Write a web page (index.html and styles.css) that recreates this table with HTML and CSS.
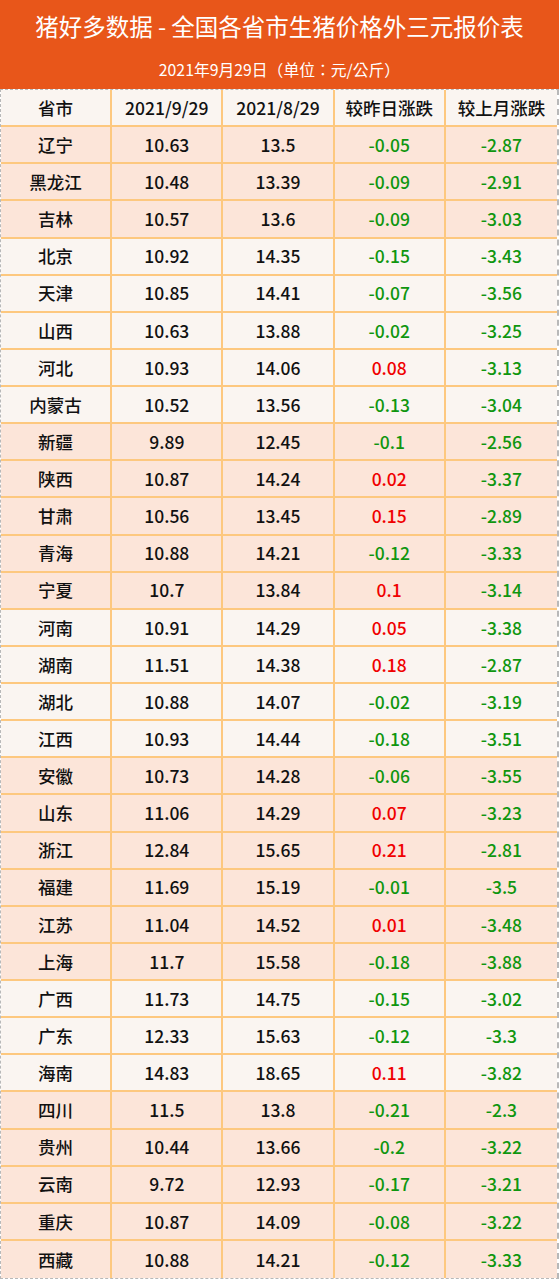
FILE: index.html
```html
<!DOCTYPE html>
<html lang="zh-CN">
<head>
<meta charset="utf-8">
<title>猪好多数据</title>
<link rel="stylesheet" href="styles.css">
</head>
<body>
<div class="header">
  <div class="title">猪好多数据 - 全国各省市生猪价格外三元报价表</div>
  <div class="sub" lang="zh-TW">2021年9月29日（单位：元/公斤）</div>
</div>
<div class="table">
  <div class="row light"><div class="c">省市</div><div class="c">2021/9/29</div><div class="c">2021/8/29</div><div class="c">较昨日涨跌</div><div class="c">较上月涨跌</div></div>
  <div class="row pink"><div class="c">辽宁</div><div class="c">10.63</div><div class="c">13.5</div><div class="c g">-0.05</div><div class="c g">-2.87</div></div>
  <div class="row pink"><div class="c">黑龙江</div><div class="c">10.48</div><div class="c">13.39</div><div class="c g">-0.09</div><div class="c g">-2.91</div></div>
  <div class="row pink"><div class="c">吉林</div><div class="c">10.57</div><div class="c">13.6</div><div class="c g">-0.09</div><div class="c g">-3.03</div></div>
  <div class="row light"><div class="c">北京</div><div class="c">10.92</div><div class="c">14.35</div><div class="c g">-0.15</div><div class="c g">-3.43</div></div>
  <div class="row light"><div class="c">天津</div><div class="c">10.85</div><div class="c">14.41</div><div class="c g">-0.07</div><div class="c g">-3.56</div></div>
  <div class="row light"><div class="c">山西</div><div class="c">10.63</div><div class="c">13.88</div><div class="c g">-0.02</div><div class="c g">-3.25</div></div>
  <div class="row light"><div class="c">河北</div><div class="c">10.93</div><div class="c">14.06</div><div class="c r">0.08</div><div class="c g">-3.13</div></div>
  <div class="row light"><div class="c">内蒙古</div><div class="c">10.52</div><div class="c">13.56</div><div class="c g">-0.13</div><div class="c g">-3.04</div></div>
  <div class="row pink"><div class="c">新疆</div><div class="c">9.89</div><div class="c">12.45</div><div class="c g">-0.1</div><div class="c g">-2.56</div></div>
  <div class="row pink"><div class="c">陕西</div><div class="c">10.87</div><div class="c">14.24</div><div class="c r">0.02</div><div class="c g">-3.37</div></div>
  <div class="row pink"><div class="c">甘肃</div><div class="c">10.56</div><div class="c">13.45</div><div class="c r">0.15</div><div class="c g">-2.89</div></div>
  <div class="row pink"><div class="c">青海</div><div class="c">10.88</div><div class="c">14.21</div><div class="c g">-0.12</div><div class="c g">-3.33</div></div>
  <div class="row pink"><div class="c">宁夏</div><div class="c">10.7</div><div class="c">13.84</div><div class="c r">0.1</div><div class="c g">-3.14</div></div>
  <div class="row light"><div class="c">河南</div><div class="c">10.91</div><div class="c">14.29</div><div class="c r">0.05</div><div class="c g">-3.38</div></div>
  <div class="row light"><div class="c">湖南</div><div class="c">11.51</div><div class="c">14.38</div><div class="c r">0.18</div><div class="c g">-2.87</div></div>
  <div class="row light"><div class="c">湖北</div><div class="c">10.88</div><div class="c">14.07</div><div class="c g">-0.02</div><div class="c g">-3.19</div></div>
  <div class="row light"><div class="c">江西</div><div class="c">10.93</div><div class="c">14.44</div><div class="c g">-0.18</div><div class="c g">-3.51</div></div>
  <div class="row pink"><div class="c">安徽</div><div class="c">10.73</div><div class="c">14.28</div><div class="c g">-0.06</div><div class="c g">-3.55</div></div>
  <div class="row pink"><div class="c">山东</div><div class="c">11.06</div><div class="c">14.29</div><div class="c r">0.07</div><div class="c g">-3.23</div></div>
  <div class="row pink"><div class="c">浙江</div><div class="c">12.84</div><div class="c">15.65</div><div class="c r">0.21</div><div class="c g">-2.81</div></div>
  <div class="row pink"><div class="c">福建</div><div class="c">11.69</div><div class="c">15.19</div><div class="c g">-0.01</div><div class="c g">-3.5</div></div>
  <div class="row pink"><div class="c">江苏</div><div class="c">11.04</div><div class="c">14.52</div><div class="c r">0.01</div><div class="c g">-3.48</div></div>
  <div class="row pink"><div class="c">上海</div><div class="c">11.7</div><div class="c">15.58</div><div class="c g">-0.18</div><div class="c g">-3.88</div></div>
  <div class="row light"><div class="c">广西</div><div class="c">11.73</div><div class="c">14.75</div><div class="c g">-0.15</div><div class="c g">-3.02</div></div>
  <div class="row light"><div class="c">广东</div><div class="c">12.33</div><div class="c">15.63</div><div class="c g">-0.12</div><div class="c g">-3.3</div></div>
  <div class="row light"><div class="c">海南</div><div class="c">14.83</div><div class="c">18.65</div><div class="c r">0.11</div><div class="c g">-3.82</div></div>
  <div class="row pink"><div class="c">四川</div><div class="c">11.5</div><div class="c">13.8</div><div class="c g">-0.21</div><div class="c g">-2.3</div></div>
  <div class="row pink"><div class="c">贵州</div><div class="c">10.44</div><div class="c">13.66</div><div class="c g">-0.2</div><div class="c g">-3.22</div></div>
  <div class="row pink"><div class="c">云南</div><div class="c">9.72</div><div class="c">12.93</div><div class="c g">-0.17</div><div class="c g">-3.21</div></div>
  <div class="row pink"><div class="c">重庆</div><div class="c">10.87</div><div class="c">14.09</div><div class="c g">-0.08</div><div class="c g">-3.22</div></div>
  <div class="row pink"><div class="c">西藏</div><div class="c">10.88</div><div class="c">14.21</div><div class="c g">-0.12</div><div class="c g">-3.33</div></div>
</div>
</body>
</html>
```
FILE: styles.css
```css
html, body {
  margin: 0;
  padding: 0;
  background: #ffffff;
}
body {
  font-family: "Noto Sans CJK SC", "Noto Sans", sans-serif;
  color: #111111;
  width: 559px;
}
.header {
  background: #e8561a;
  height: 89px;
  box-sizing: border-box;
  display: flex;
  flex-direction: column;
  align-items: center;
  color: #ffffff;
  padding-top: 12px;
}
.title {
  font-size: 23.5px;
  line-height: 28px;
  font-weight: 400;
  white-space: nowrap;
}
.sub {
  font-family: "Noto Sans CJK TC", "Noto Sans CJK SC", sans-serif;
  font-size: 15.8px;
  line-height: 18px;
  margin-top: 21px;
  white-space: nowrap;
}
.table {
  box-sizing: border-box;
  width: 559px;
  height: 1190px;
  border: 1px dashed #b8b8b8;
  border-right-width: 2px;
  display: grid;
  grid-template-rows: repeat(32, 1fr);
}
.row {
  display: grid;
  grid-template-columns: repeat(5, 1fr);
  border-bottom: 2px solid #fdc87f;
  min-height: 0;
}
.row:last-child {
  border-bottom: none;
}
.row.light {
  background: #faf5f1;
}
.row.pink {
  background: #fce5d9;
}
.c {
  display: flex;
  align-items: center;
  justify-content: center;
  font-size: 17.5px;
  font-weight: 500;
  line-height: 1;
  border-right: 2px solid #fdc87f;
  white-space: nowrap;
}
.c:last-child {
  border-right: none;
}
.g {
  color: #0f960f;
}
.r {
  color: #f00000;
}
```
